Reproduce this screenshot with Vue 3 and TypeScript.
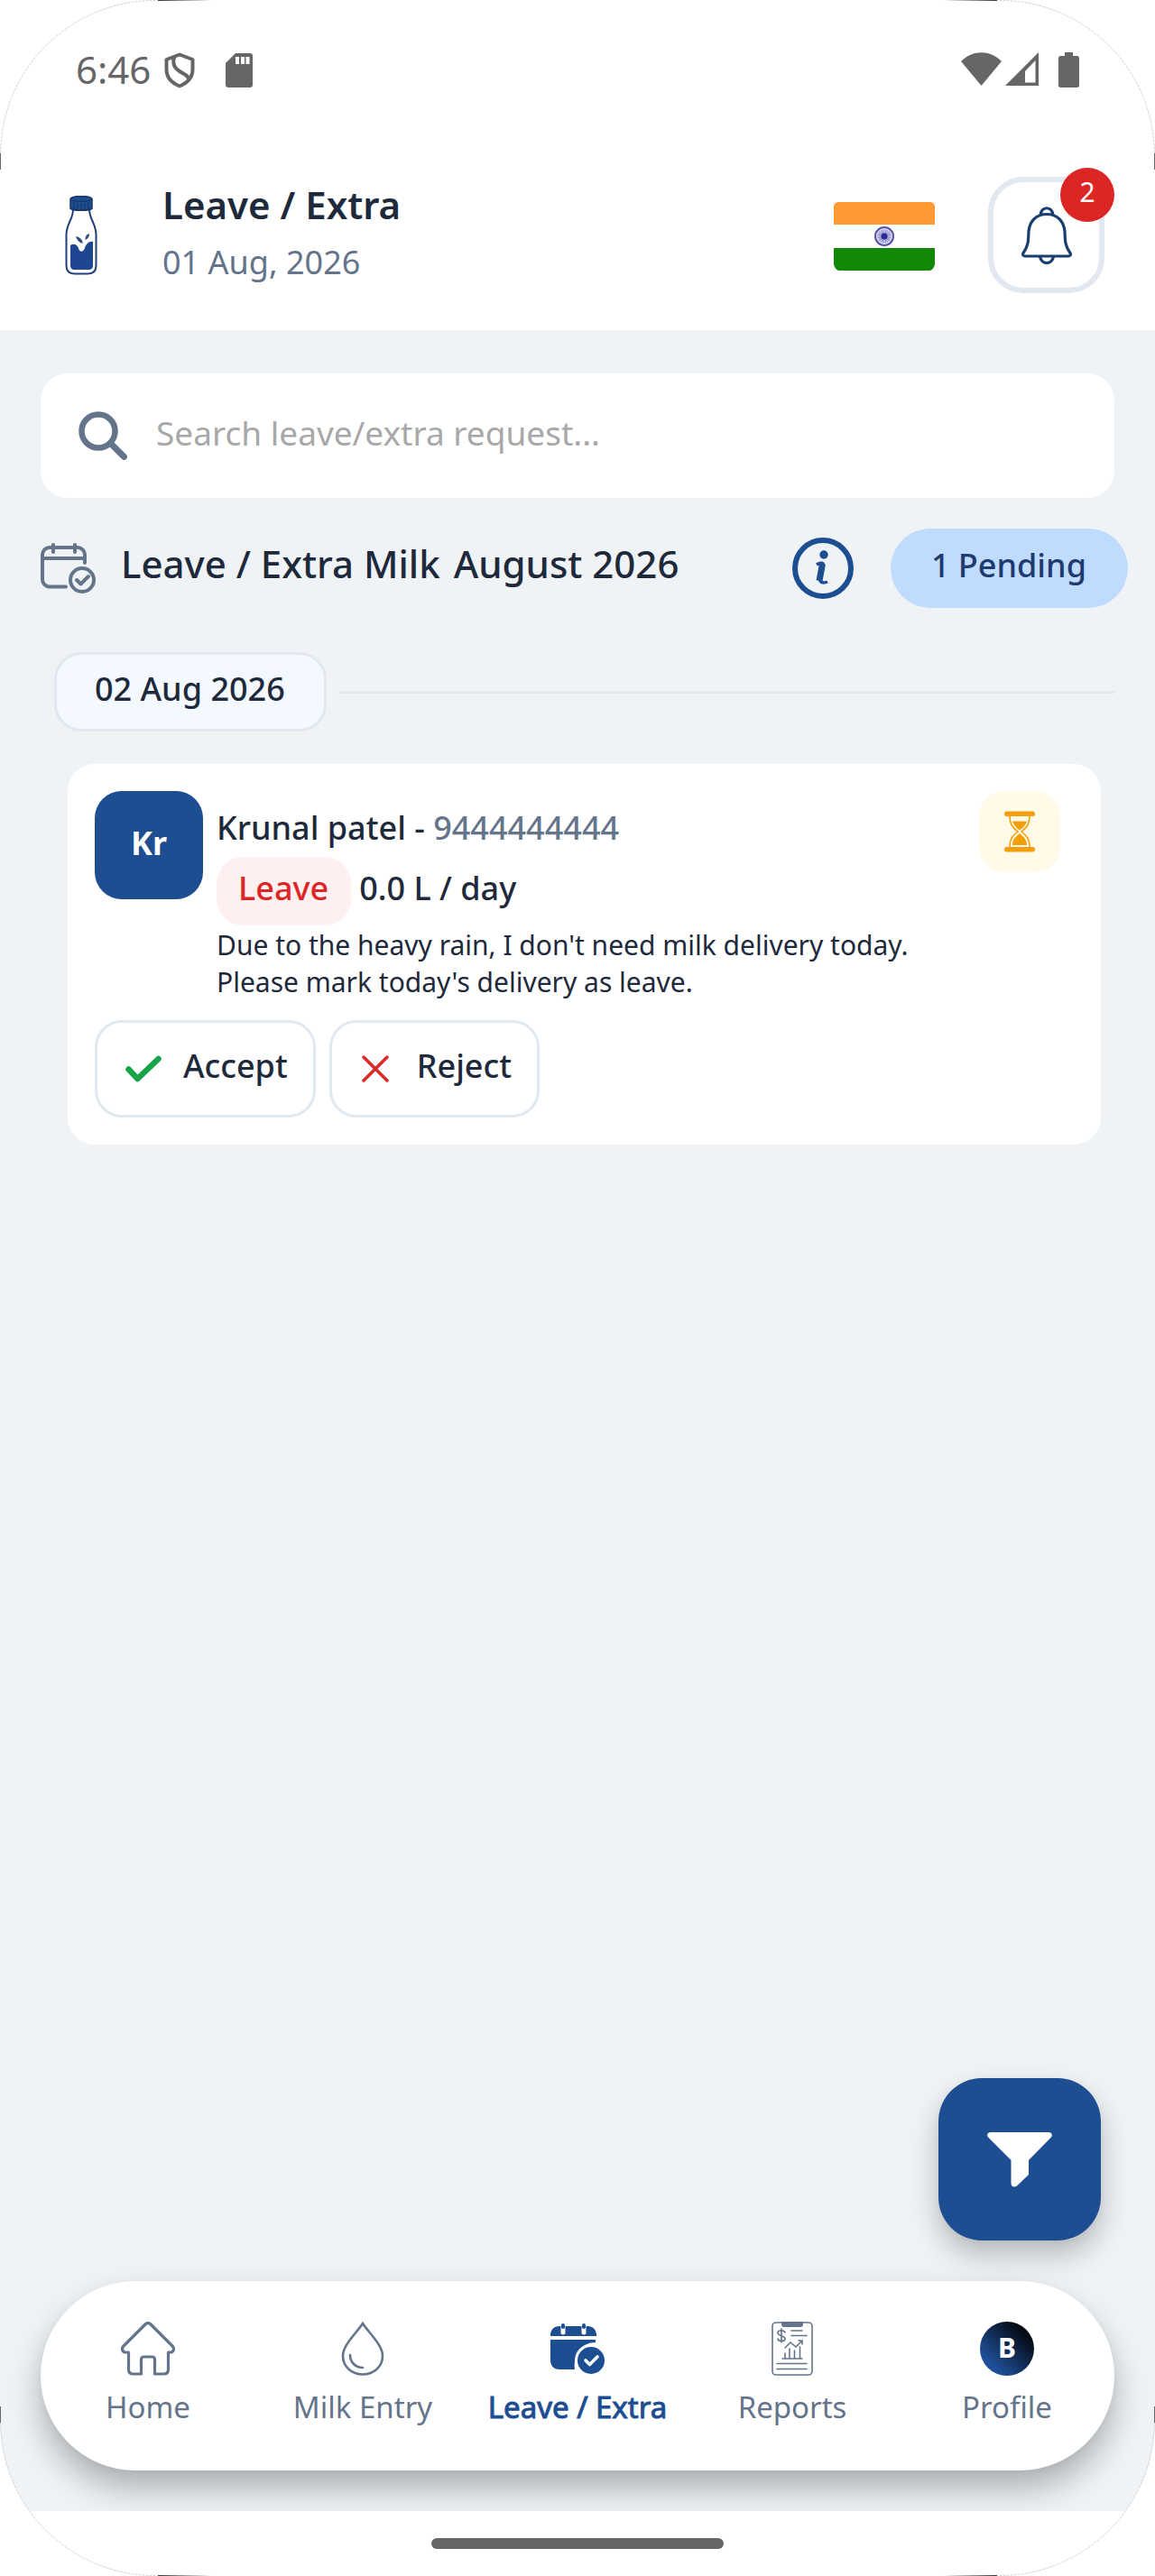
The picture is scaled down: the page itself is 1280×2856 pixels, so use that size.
<script setup lang="ts">
import { ref } from 'vue'

interface NavItem {
  id: string
  label: string
}

const query = ref('')
const active = ref('leave')

const navItems: NavItem[] = [
  { id: 'home', label: 'Home' },
  { id: 'milk', label: 'Milk Entry' },
  { id: 'leave', label: 'Leave / Extra' },
  { id: 'reports', label: 'Reports' },
  { id: 'profile', label: 'Profile' },
]

const corners = ['tl', 'tr', 'bl', 'br']
const spokes = Array.from({ length: 12 }, (_, i) => i * 15)
</script>

<template>
  <div class="screen">
    <div class="status">
      <span class="clock">6:46</span>
      <svg class="shield" width="34" height="40" viewBox="0 0 34 40" fill="none" stroke="#666" stroke-width="4" stroke-linejoin="round">
        <path d="M17 2.500 31.500 8v11c0 9-6 15-14.500 18.500C8.500 34 2.500 28 2.500 19V8z" />
        <path d="M11 5c-2 8 0 12 6 16s10 5 10 9" />
      </svg>
      <svg class="sd" width="30" height="38" viewBox="0 0 30 38">
        <path d="M11 0h16a3 3 0 0 1 3 3v32a3 3 0 0 1-3 3H3a3 3 0 0 1-3-3V11z" fill="#666" />
        <path d="M11 4h4v8h-4zM17 4h4v8h-4zM22.500 4h4v8h-4z" fill="#fff" />
      </svg>
      <div class="signals">
        <svg width="45" height="37" viewBox="0 0 45 37"><path d="M0 10C13-3 32-3 45 10L22.500 37z" fill="#666" /></svg>
        <svg width="37" height="37" viewBox="0 0 37 37">
          <path d="M37 0v37H0z" fill="#666" />
          <path d="M33.500 9v24.500H22V21z" fill="#fff" />
        </svg>
        <svg class="battery" width="23" height="39" viewBox="0 0 23 39">
          <path d="M7 0h9v4h4.500A2.500 2.500 0 0 1 23 6.500v30a2.500 2.500 0 0 1-2.500 2.500h-18A2.500 2.500 0 0 1 0 36.500v-30A2.500 2.500 0 0 1 2.500 4H7z" fill="#666" />
        </svg>
      </div>
    </div>

    <header class="header">
      <svg class="bottle" width="36" height="88" viewBox="0 0 36 88">
        <path d="M9 15c0 12-7 14-7.500 28v34c0 7 4 9.500 9 9.500h15c5 0 9-2.500 9-9.500V43C34 29 27 27 27 15" fill="#fff" stroke="#1e3f7a" stroke-width="2" />
        <path d="M6 3.500C8-.5 28-.5 30 3.500V14c-2 3-22 3-24 0z" fill="#1d4e91" stroke="#173463" stroke-width="1.500" />
        <path d="M7 4.500c4 2.500 18 2.500 22 0M10 7v8M14 8v8M18 8v8M22 8v8M26 7v8" fill="none" stroke="#14305d" />
        <path d="M6 55c4-3 8 0 9 3 1 5 5 5 7 0 1-4 5-8 9-7v26c0 4-2 5-5 5H11c-3 0-5-1-5-5z" fill="#1f4690" />
        <path d="M12 45c5 1 8 4 7.500 8C16 52 13 49 12 45zM27 42c0 4-2 6-4.500 7 0-4 1-6 4.500-7z" fill="#34507f" />
      </svg>
      <div class="heading">
        <h1>Leave / Extra</h1>
        <p>01 Aug, 2026</p>
      </div>
      <button class="flag" aria-label="Language">
        <svg width="112" height="76" viewBox="0 0 112 76">
          <path d="M6 0h100a6 6 0 0 1 6 8v17H0V8A6 6 0 0 1 6 0z" fill="#ff9933" />
          <path d="M0 51h112v17c0 4-3 8-6 8H6c-3 0-6-4-6-8z" fill="#128807" />
          <circle cx="56" cy="38" r="10" fill="#eeeef8" stroke="#5550ad" stroke-width="2" />
          <path v-for="a in spokes" :key="a" d="M56 30v16" :transform="`rotate(${a} 56 38)`" stroke="#8c8ac8" stroke-width="1" />
          <circle cx="56" cy="38" r="3.500" fill="#2a2a98" />
        </svg>
      </button>
      <button class="bell" aria-label="Notifications">
        <svg width="56" height="64" viewBox="0 0 56 64" fill="none" stroke="#173e6e" stroke-width="3.200" stroke-linejoin="round">
          <path d="M28 8.500c12 0 19 8 20 19 .5 11 0 15 6 24 1 2 0 3.500-2 3.500H4c-2 0-3-1.500-2-3.500 6-9 5.500-13 6-24 1-11 8-19 20-19z" />
          <path d="M21 10c0-11 14-11 14 0M20.500 55c1 10 14 10 15 0" />
        </svg>
        <span class="badge">2</span>
      </button>
    </header>

    <main class="main">
      <label class="search">
        <svg width="54" height="54" viewBox="0 0 54 54" fill="none" stroke="#64748b" stroke-linecap="round">
          <circle cx="22" cy="22" r="18.500" stroke-width="6.500" />
          <path d="M36 36 50.500 50.500" stroke-width="7" />
        </svg>
        <input v-model="query" type="search" placeholder="Search leave/extra request..." aria-label="Search leave/extra request" />
      </label>

      <div class="section">
        <svg class="calendar" width="61" height="57" viewBox="0 0 61 57" fill="none" stroke="#64748b" stroke-width="4" stroke-linecap="round" stroke-linejoin="round">
          <path d="M28 48.500H10a8 8 0 0 1-8-8V13a8 8 0 0 1 8-8h31a8 8 0 0 1 8 8v9M2 17h47M14 2v8M38 2v8" />
          <circle cx="46" cy="41" r="13" />
          <path d="m40 41 4.500 4.500L53 37" />
        </svg>
        <h2>Leave / Extra Milk</h2>
        <h2>August 2026</h2>
        <button class="info" aria-label="Information">
          <svg width="68" height="68" viewBox="0 0 68 68" fill="none" stroke="#1d4e91">
            <circle cx="34" cy="34" r="31" stroke-width="6" />
            <circle cx="35" cy="19" r="4.700" fill="#1d4e91" stroke="none" />
            <path d="M27 30c4-2.500 9-3 7 3l-3 12c-1 5 3 6 8 4" stroke-width="3.500" />
            <path d="m33.500 29-3.500 19" stroke-width="7" />
          </svg>
        </button>
        <span class="pending">1 Pending</span>
      </div>

      <div class="day">
        <time class="day-label">02 Aug 2026</time>
        <hr />
      </div>

      <article class="card">
        <div class="card-head">
          <div class="avatar">Kr</div>
          <div class="details">
            <p class="name">Krunal patel - <a href="tel:9444444444">9444444444</a></p>
            <p class="amount"><span class="tag">Leave</span><span class="litres">0.0 L / day</span></p>
            <p class="note">Due to the heavy rain, I don't need milk delivery today.<br />Please mark today's delivery as leave.</p>
          </div>
          <div class="waiting">
            <svg width="34" height="46" viewBox="0 0 34 46">
              <rect y="0.500" width="34" height="5.500" rx="2.500" fill="#f59e0b" />
              <rect y="40" width="34" height="5.500" rx="2.500" fill="#f59e0b" />
              <path d="M6 6c0 9 3 12 9 17-6 5-9 8-9 17M28 6c0 9-3 12-9 17 6 5 9 8 9 17" fill="none" stroke="#f59e0b" stroke-width="1.600" />
              <path d="M9 11.500h16c-1 4-4 7-8 10-4-3-7-6-8-10zM17 25c5 4 8 7 8 13H9c0-6 3-9 8-13z" fill="#f59e0b" />
            </svg>
          </div>
        </div>
        <div class="actions">
          <button class="accept">
            <svg width="40" height="30" viewBox="0 0 40 30" fill="none" stroke="#16a34a" stroke-width="6.500" stroke-linecap="round" stroke-linejoin="round">
              <path d="m3.500 15.500 10 10.500L36.500 4" />
            </svg>
            <span>Accept</span>
          </button>
          <button class="reject">
            <svg width="30" height="30" viewBox="0 0 30 30" fill="none" stroke="#dc2626" stroke-width="3.500" stroke-linecap="round">
              <path d="M2 2 28 28M28 2 2 28" />
            </svg>
            <span>Reject</span>
          </button>
        </div>
      </article>

      <button class="fab" aria-label="Filter">
        <svg width="72" height="61" viewBox="0 0 72 61">
          <path d="M4 0h64c4 0 5 4 2.500 6L46 31v16L33 59.500c-3 2.500-6.500.5-6.500-3V31L1.500 6C-1 4 0 0 4 0z" fill="#fff" />
        </svg>
      </button>
    </main>

    <nav class="nav">
      <button v-for="item in navItems" :key="item.id" :class="{ on: item.id === active }" @click="active = item.id">
        <svg v-if="item.id === 'home'" width="60" height="60" viewBox="0 0 60 60" fill="none" stroke="#64748b" stroke-width="3.200" stroke-linejoin="round">
          <path d="M27.500 2.500q2.500-2 5 0L57 27c3 3 1 7-2 7h-2.500v19q0 5-5 5h-10V42q0-3-3-3h-9q-3 0-3 3v16h-9q-5 0-5-5V34H5c-3 0-5-4-2-7z" />
        </svg>
        <svg v-else-if="item.id === 'milk'" width="60" height="60" viewBox="0 0 60 60" fill="none" stroke="#64748b" stroke-width="2.600" stroke-linecap="round">
          <path d="M30 2C22 14 8 26 8 38c0 12 10 20.500 22 20.500S52 50 52 38C52 26 38 14 30 2z" />
          <path d="M16 37c0 8 6 14 14 14" />
        </svg>
        <svg v-else-if="item.id === 'leave'" width="60" height="60" viewBox="0 0 60 60">
          <path d="M0 15C0 9 4 5 10 5h31c6 0 10 4 10 10v1H0zM0 20h50v3c-15 0-25 12-23 30H10C4 53 0 49 0 43z" fill="#1d4e91" />
          <path d="M14 5v7M37 5v7" stroke="#fff" stroke-width="5" stroke-linecap="round" />
          <path d="M14 4v2M37 4v2" stroke="#1d4e91" stroke-width="4" stroke-linecap="round" />
          <circle cx="45" cy="43" r="18" fill="#fff" />
          <circle cx="45" cy="43" r="15" fill="#1d4e91" />
          <path d="m39 43 4.500 4.500L52 39" fill="none" stroke="#fff" stroke-width="3.600" stroke-linecap="round" stroke-linejoin="round" />
        </svg>
        <svg v-else-if="item.id === 'reports'" width="60" height="60" viewBox="0 0 60 60" fill="none" stroke="#64748b" stroke-width="1.600" stroke-linecap="round">
          <rect x="8" y="1" width="44" height="58" rx="4" />
          <path d="M18 0h24v3q0 3-3 3H21q-3 0-3-3z" fill="#64748b" stroke="none" />
          <path d="M29 10h12M29 15.500h17M13 46.500h33M13 52.500h33M19 41h22M22 41v-6M27 41V30M32.500 41v-9M38.500 41V28M22 29l6-6 6 5 7-7M37 21h4v4" />
          <path d="M22 12c-1-3-8-3-8 .5s8 3 8 6.500-7 3.500-8 0M18 8v15" />
        </svg>
        <span v-else class="profile">B</span>
        <span class="nav-label">{{ item.label }}</span>
      </button>
    </nav>
    <footer class="gesture"><div class="handle"></div></footer>

    <svg v-for="c in corners" :key="c" :class="['corner', c]" width="236" height="190" viewBox="0 0 236 190">
      <defs>
        <linearGradient id="edge"><stop offset="0" stop-color="#333" /><stop offset="1" stop-color="#333" stop-opacity="0" /></linearGradient>
      </defs>
      <path d="M0 0h172A172 172 0 0 0 0 172z" fill="#fff" />
      <path d="M172 .5A171.500 171.500 0 0 0 .5 172" fill="none" stroke="#d4d4d4" stroke-dasharray="3 1" />
      <path d="M175 0h60v1h-60z" fill="url(#edge)" />
      <path d="M0 170h1v18H0z" fill="#666" />
    </svg>
  </div>
</template>

<style>
body {
  margin: 0;
  background: #fff;
}
</style>

<style scoped>
.screen {
  position: relative;
  display: flex;
  flex-direction: column;
  min-height: 100vh;
  overflow: hidden;
  background: #eff3f6;
  color: #1e293b;
  font-family: "Noto Sans", sans-serif;
  font-size: 36px;
  font-weight: 500;
}
.screen * {
  box-sizing: border-box;
}
svg {
  display: block;
  flex: none;
}
h1, h2, p {
  margin: 0;
}
button {
  padding: 0;
  border: 0;
  background: none;
  color: inherit;
  font: inherit;
  cursor: pointer;
}
.status {
  display: flex;
  align-items: center;
  height: 155px;
  padding: 0 84px;
  background: #fff;
  color: #666;
}
.clock {
  padding-bottom: 2px;
  font-size: 42px;
  font-weight: 400;
  line-height: 32px;
}
.shield {
  margin-left: 15px;
}
.sd {
  margin-left: 34px;
}
.signals {
  display: flex;
  gap: 4px;
  margin-left: auto;
}
.battery {
  margin-left: 18px;
}
.header {
  display: flex;
  align-items: center;
  height: 211px;
  padding: 0 56px 0 72px;
  background: #fff;
}
.heading {
  flex: 1;
  margin-left: 72px;
  padding-bottom: 3px;
  line-height: 64px;
}
h1 {
  font-size: 42px;
  font-weight: 600;
}
.heading p {
  color: #64748b;
  font-weight: 400;
}
.flag {
  margin-right: 59px;
  padding-top: 3px;
}
.bell {
  position: relative;
  display: grid;
  place-items: center;
  width: 129px;
  height: 129px;
  border: 6px solid #e2e8f0;
  border-radius: 39px;
}
.badge {
  position: absolute;
  top: -16px;
  right: -17px;
  width: 60px;
  height: 60px;
  border-radius: 50%;
  background: #dc2626;
  color: #fff;
  font-size: 30px;
  font-weight: 400;
  line-height: 54px;
  text-align: center;
}
.main {
  position: relative;
  flex: 1;
  padding: 48px 45px 0;
}
.search {
  display: flex;
  align-items: center;
  gap: 32px;
  height: 138px;
  padding: 0 42px;
  border-radius: 30px;
  background: #fff;
}
.search input {
  flex: 1;
  min-width: 0;
  height: 100%;
  padding: 0 0 8px;
  border: 0;
  outline: 0;
  background: none;
  color: inherit;
  font: inherit;
  font-size: 37px;
  font-weight: 400;
}
.search input::placeholder {
  color: #a8a8a8;
  opacity: 1;
}
.section {
  display: flex;
  align-items: center;
  height: 88px;
  margin: 34px -15px 0 0;
}
h2 {
  margin-right: 15px;
  padding-bottom: 11px;
  font-size: 42px;
  font-weight: 500;
  white-space: nowrap;
}
.calendar {
  margin-right: 28px;
}
.info {
  margin: 0 41px 0 auto;
}
.pending {
  padding: 0 46px 6px 45px;
  border-radius: 44px;
  background: #bfdbfe;
  color: #1e3a6e;
  line-height: 82px;
  white-space: nowrap;
}
.day {
  display: flex;
  align-items: center;
  gap: 15px;
  margin: 49px 0 36px 15px;
}
.day-label {
  padding: 0 43px 6px 42px;
  border: 3px solid #e2e8f0;
  border-radius: 30px;
  background: #f4f8ff;
  line-height: 76px;
}
.day hr {
  flex: 1;
  height: 3px;
  margin: 0;
  border: 0;
  background: #e2e8f0;
}
.card {
  margin: 0 15px 0 30px;
  padding: 30px;
  border-radius: 30px;
  background: #fff;
}
.card-head {
  display: flex;
  align-items: flex-start;
}
.avatar {
  flex: none;
  width: 120px;
  height: 120px;
  margin-right: 15px;
  border-radius: 30px;
  background: #1d4e91;
  color: #fff;
  font-weight: 700;
  line-height: 116px;
  text-align: center;
}
.details {
  flex: 1;
  padding-top: 8px;
}
.name {
  line-height: 65px;
}
.name a {
  color: #64748b;
  text-decoration: none;
}
.amount {
  display: flex;
}
.amount span {
  padding-bottom: 6px;
  line-height: 70px;
}
.amount .tag {
  padding: 0 25px 6px 24px;
  border-radius: 30px;
  background: #fef0f0;
  color: #dc2626;
}
.litres {
  margin-left: 9px;
}
.note {
  margin-top: 1px;
  font-size: 30px;
  font-weight: 400;
  line-height: 41px;
}
.waiting {
  display: grid;
  place-items: center;
  width: 90px;
  height: 90px;
  margin-right: 15px;
  border-radius: 28px;
  background: #fffbe8;
}
.actions {
  display: flex;
  gap: 15px;
  margin-top: 22px;
}
.actions button {
  display: flex;
  align-items: center;
  height: 108px;
  padding: 0 28px 0 31px;
  border: 3px solid #e2e8f0;
  border-radius: 30px;
}
.actions span {
  margin-left: 24px;
  padding-bottom: 8px;
}
.actions .reject {
  padding-left: 33px;
}
.actions .reject span {
  margin-left: 31px;
}
.fab {
  position: absolute;
  right: 60px;
  bottom: 45px;
  display: grid;
  place-items: center;
  width: 180px;
  height: 180px;
  border-radius: 48px;
  background: #1d4e91;
  box-shadow: 0 16px 32px rgba(0, 0, 0, 0.24), 0 2px 10px rgba(0, 0, 0, 0.04);
}
.nav {
  position: relative;
  display: flex;
  height: 210px;
  margin: 0 45px 45px;
  border-radius: 105px;
  background: #fff;
  box-shadow: 0 20px 36px rgba(0, 0, 0, 0.28), 0 2px 10px rgba(0, 0, 0, 0.04);
}
.nav button {
  display: flex;
  flex: 1 1 0;
  flex-direction: column;
  align-items: center;
  gap: 10px;
  padding-top: 45px;
  color: #64748b;
  font-size: 33px;
  font-weight: 400;
  line-height: 50px;
  white-space: nowrap;
}
.nav .on {
  color: #1d4e91;
}
.on .nav-label {
  -webkit-text-stroke: 1px #1d4e91;
}
.profile {
  width: 60px;
  height: 60px;
  border-radius: 50%;
  background: linear-gradient(45deg, #1f5099 20%, #000 90%);
  color: #fff;
  font-size: 30px;
  font-weight: 700;
  line-height: 58px;
  text-align: center;
}
.gesture {
  position: relative;
  display: grid;
  place-items: center;
  height: 72px;
  background: #fff;
}
.handle {
  width: 324px;
  height: 12px;
  border-radius: 6px;
  background: #666;
}
.corner {
  position: absolute;
  pointer-events: none;
}
.tl {
  top: 0;
  left: 0;
}
.tr {
  top: 0;
  right: 0;
  transform: scaleX(-1);
}
.bl {
  bottom: 0;
  left: 0;
  transform: scaleY(-1);
}
.br {
  right: 0;
  bottom: 0;
  transform: scale(-1);
}
</style>
